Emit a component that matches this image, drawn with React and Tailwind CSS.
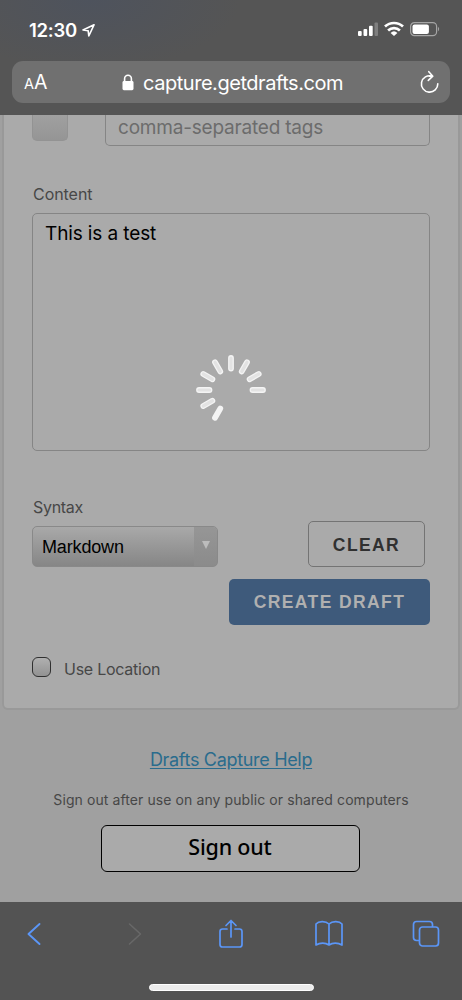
const spokes = [210, 240, 270, 300, 330, 0, 30, 60, 90];

function StatusBar() {
  return (
    <div className="flex h-[61px] items-start justify-between pl-[29px] pr-[22px] text-white">
      <div className="flex items-center pt-[18px]">
        <span className="w-[53px] whitespace-nowrap text-[18.5px] leading-6 font-semibold tracking-[-0.25px]">12:30</span>
        <svg className="h-[13px] w-[13px]" viewBox="0 0 13 13" fill="none" stroke="currentColor" strokeWidth="1.6" strokeLinejoin="round">
          <path d="M12 .8 1 6l5.200.8.600 5.200Z" />
        </svg>
      </div>
      <div className="flex items-center gap-[6px] pt-[21px]">
        <svg className="h-[16px] w-[21px]" viewBox="0 0 21 16" fill="currentColor">
          <rect x="1" y="10" width="3.7" height="5" rx="1" />
          <rect x="6.5" y="8" width="3.7" height="7" rx="1" />
          <rect x="12" y="4.8" width="3.7" height="10.2" rx="1" />
          <rect x="17.5" y="1.5" width="3.5" height="13.5" rx="1" opacity=".25" />
        </svg>
        <svg className="h-[16px] w-[20px]" viewBox="0 0 20 16" fill="none" stroke="currentColor" strokeWidth="2.7">
          <path d="M1 5.600a13.100 13.100 0 0 1 18 0M4.100 9.400a8.700 8.700 0 0 1 11.800 0" />
          <path d="M6.600 11.900a5 5 0 0 1 6.800 0L10 15Z" fill="currentColor" stroke="none" />
        </svg>
        <svg className="h-[16px] w-[30px]" viewBox="0 0 30 16" fill="none">
          <rect x=".6" y="1.6" width="26" height="13" rx="3.8" stroke="#a5a5a5" strokeWidth="1.2" />
          <rect x="2.5" y="3.4" width="16.4" height="9.6" rx="2" fill="white" />
          <path d="M28 6v4.200c1.500-.6 1.500-3.600 0-4.200Z" fill="#a5a5a5" />
        </svg>
      </div>
    </div>
  );
}

function AddressBar() {
  return (
    <div className="ml-[12px] flex h-[42px] w-[438px] items-center rounded-[11px] bg-[#707070] pl-[12px] text-white">
      <span className="flex w-[98px] items-baseline whitespace-nowrap pt-[2px] leading-6">
        <span className="text-[14.5px]">A</span>
        <span className="text-[19.5px] tracking-[-0.5px]">A</span>
      </span>
      <svg className="h-[17px] w-[12px]" viewBox="0 0 12 17">
        <path d="M2.600 8V4.700a3.400 3.400 0 0 1 6.800 0V8" fill="none" stroke="currentColor" strokeWidth="1.6" />
        <rect x=".5" y="7" width="11" height="9.2" rx="1.4" fill="currentColor" />
      </svg>
      <span className="ml-[9px] w-[276px] whitespace-nowrap pt-px text-[20px] leading-6 tracking-[-0.46px]">capture.getdrafts.com</span>
      <svg className="h-[24px] w-[20px]" viewBox="0 0 20 24" fill="none" stroke="currentColor" strokeWidth="1.6" strokeLinecap="round" strokeLinejoin="round">
        <path d="M13 6.100a8.200 8.200 0 1 0 5.800 7.700M13 6.100H10.200M9.800 1.700l4 4.500-4.500 4.200" />
      </svg>
    </div>
  );
}

function Spinner() {
  return (
    <svg className="absolute top-[240px] left-[196px] h-[70px] w-[70px]" viewBox="-35 -35 70 70" strokeLinecap="round">
      {spokes.map((angle) => (
        <g key={angle} transform={`rotate(${angle})`}>
          <path d="M0-32V-21.500" stroke="#f4f4f4" strokeWidth="5.8" />
          {angle !== 210 && <path d="M0-32V-21.500" stroke="#e3e3e3" strokeWidth="3.2" />}
        </g>
      ))}
    </svg>
  );
}

function DraftForm() {
  return (
    <section className="mx-[2px] h-[595px] rounded-b-[6px] border-x-2 border-b-2 border-[#999] bg-[#aaa] pl-[28px] text-[#474747]">
      <div className="flex h-[31px] items-start">
        <div className="h-[26px] w-[36px] rounded-b-[5px] border-x border-b border-[#939393] bg-linear-to-b from-[#a0a0a0] to-[#959595]" />
        <div className="ml-[37px] h-[31px] w-[325px] rounded-b-[5px] border-x border-b border-[#858585] pl-[12px]">
          <span className="block whitespace-nowrap pt-px text-[19px] leading-[23px] tracking-[-0.2px] text-[#6c6c6c]">comma-separated tags</span>
        </div>
      </div>
      <label className="mt-[36px] block h-[31px] pl-px text-[16px] leading-6 tracking-[-0.05px]">Content</label>
      <div className="h-[238px] w-[398px] rounded-[5px] border border-[#858585] pt-[8px] pl-[12px] text-[19px] leading-6 text-black">
        <span className="tracking-[-0.12px]">This is a test</span>
      </div>
      <div className="mt-[43px] flex">
        <div className="w-[186px]">
          <label className="block h-[32px] pl-px text-[16px] leading-[26px] tracking-[-0.3px]">Syntax</label>
          <div className="flex h-[41px] overflow-hidden rounded-[5px] border border-[#898989] bg-linear-to-b from-[#a9a9a9] to-[#868686] text-black">
            <span className="flex w-[161px] items-center pt-[2px] pl-[9px] font-['Liberation_Sans'] text-[18px] tracking-[-0.15px]">Markdown</span>
            <span className="flex flex-1 justify-center bg-linear-to-b from-[#969696] to-[#8b8b8b] pt-[14px]">
              <svg className="h-[8px] w-[8px]" viewBox="0 0 8 8"><path d="M0 0h8L4 8Z" fill="#bcbcbc" /></svg>
            </span>
          </div>
        </div>
        <div className="flex w-[212px] flex-col items-end pt-[27px] font-['Liberation_Sans'] text-[17.5px] font-bold">
          <button className="mr-[5px] h-[46px] w-[117px] rounded-[5px] border border-[#747474] pt-[2px] tracking-[1.4px] text-[#303030]">CLEAR</button>
          <button className="mt-[12px] h-[46px] w-[201px] whitespace-nowrap rounded-[5px] bg-[#3e5a7b] pt-px tracking-[1.4px] text-[#b0b0b0]">CREATE DRAFT</button>
        </div>
      </div>
      <div className="mt-[32px] flex items-start">
        <span className="h-[20px] w-[19px] rounded-[6px] border-[1.5px] border-[#303030] bg-linear-to-b from-[#b0b0b0] to-[#929292]" />
        <label className="ml-[13px] whitespace-nowrap text-[16px] leading-6 tracking-[-0.25px]">Use Location</label>
      </div>
    </section>
  );
}

function Footer() {
  return (
    <div className="flex h-[192px] flex-col items-center pt-[37px]">
      <a className="whitespace-nowrap text-[18px] leading-[26px] tracking-[-0.32px] text-[#2a6c8d] underline underline-offset-2">Drafts Capture Help</a>
      <p className="mt-[15px] whitespace-nowrap text-[14px] leading-[24px] tracking-[0.09px] text-[#474747]">Sign out after use on any public or shared computers</p>
      <button className="mt-[13px] mr-[2px] h-[47px] w-[259px] rounded-[6px] border-[1.5px] border-black bg-[#aaa] pb-[3px] font-['Noto_Sans'] text-[21.5px] leading-[30px] font-medium tracking-[-0.2px] text-black">Sign out</button>
    </div>
  );
}

function Toolbar() {
  return (
    <nav className="h-[98px] bg-[#535353]">
      <div className="flex h-[64px] items-center pl-[27px] text-[#5b96f7]">
        <svg className="h-[24px] w-[14px]" viewBox="0 0 14 24" fill="none" stroke="currentColor" strokeWidth="1.9" strokeLinecap="round" strokeLinejoin="round"><path d="M12.500 2 1.500 12l11 10" /></svg>
        <svg className="ml-[87px] h-[24px] w-[14px] text-[#686868]" viewBox="0 0 14 24" fill="none" stroke="currentColor" strokeWidth="1.6" strokeLinecap="round" strokeLinejoin="round"><path d="m1.500 2 11 10-11 10" /></svg>
        <svg className="ml-[76px] h-[30px] w-[26px]" viewBox="0 0 26 30" fill="none" stroke="currentColor" strokeWidth="1.7" strokeLinecap="round" strokeLinejoin="round"><path d="M9 10H4.500Q2 10 2 12.500v13Q2 28 4.500 28h17q2.500 0 2.500-2.500v-13Q24 10 21.500 10H17M13 18V1.500M8 6.500l5-5 5 5" /></svg>
        <svg className="ml-[70px] h-[28px] w-[30px]" viewBox="0 0 30 28" fill="none" stroke="currentColor" strokeWidth="1.7" strokeLinejoin="round"><path d="M15 4C11.500.6 4.500 1 2 4v21c4-2.500 9.500-2.500 13 0 3.500-2.500 9-2.500 13 0V4C25.500 1 18.500.6 15 4ZM15 4v21" /></svg>
        <svg className="ml-[68px] h-[28px] w-[28px]" viewBox="0 0 28 28" fill="none" stroke="currentColor" strokeWidth="1.7" strokeLinejoin="round"><path d="M7 20.500H4.500Q1.500 20.500 1.500 17.500V4.500Q1.500 1.500 4.500 1.500h13q3 0 3 3V7" /><rect x="7.5" y="7" width="19" height="19" rx="3" /></svg>
      </div>
      <div className="mx-auto mt-[18px] h-[7px] w-[165px] rounded-full border border-white bg-[#ececec]" />
    </nav>
  );
}

export default function App() {
  return (
    <div className="h-[1000px] w-[462px] overflow-hidden bg-[#a0a0a0] font-['Inter',sans-serif]">
      <header className="h-[115px] bg-[#555] bg-[radial-gradient(ellipse_150px_70px_at_90px_0px,#4e535d,#555)]">
        <StatusBar />
        <AddressBar />
      </header>
      <main className="relative">
        <DraftForm />
        <Footer />
        <Spinner />
      </main>
      <Toolbar />
    </div>
  );
}
